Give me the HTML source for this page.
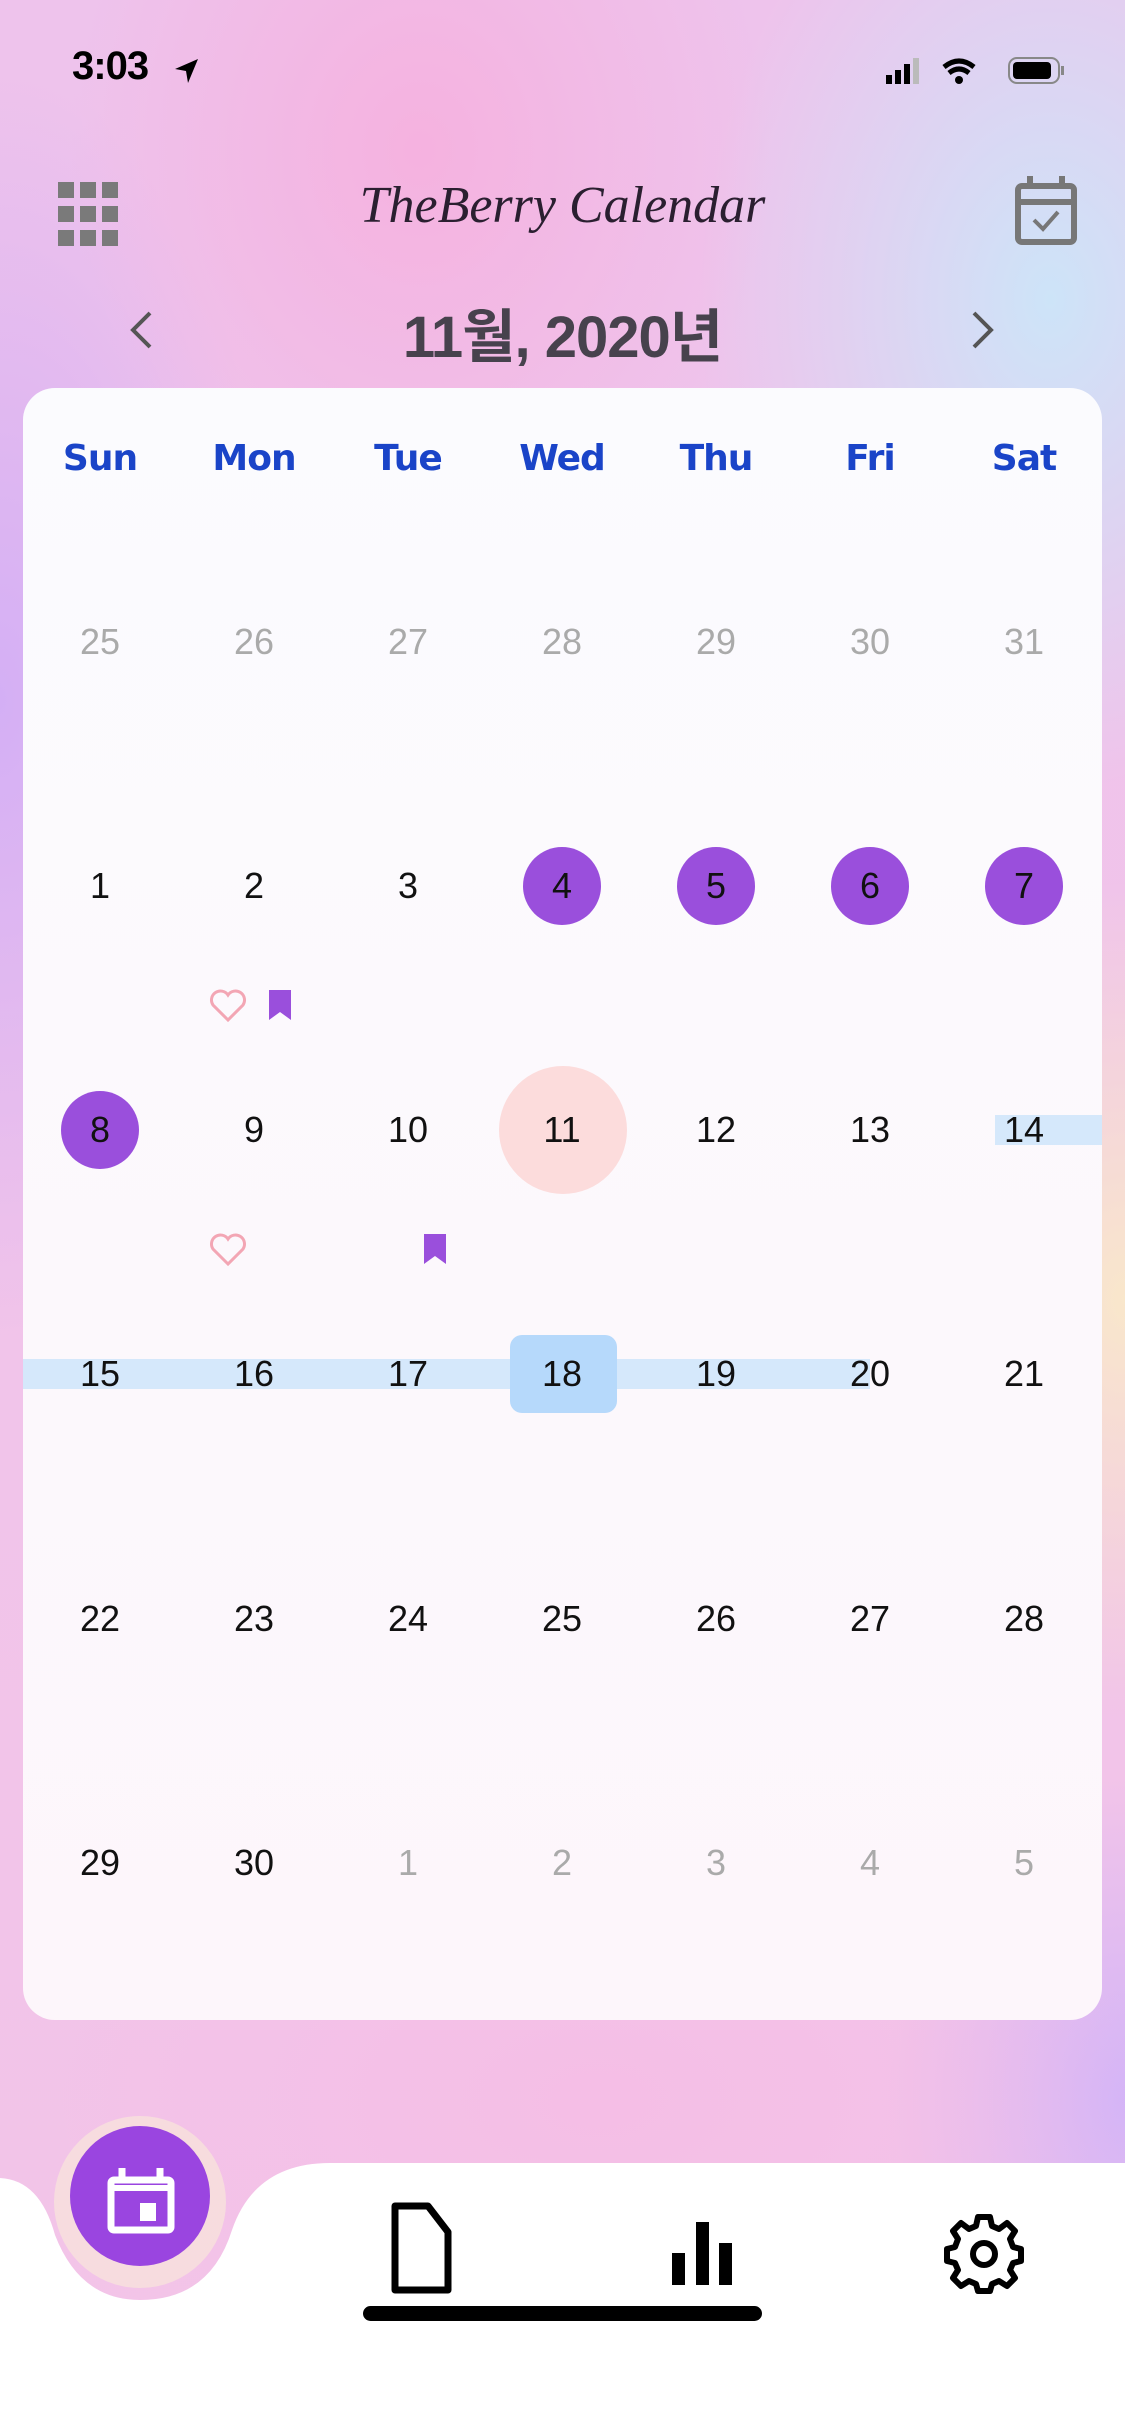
<!DOCTYPE html>
<html><head><meta charset="utf-8"><style>
*{margin:0;padding:0;box-sizing:border-box}
body{width:1125px;height:2436px;overflow:hidden;position:relative;font-family:"Liberation Sans","Noto Sans CJK KR",sans-serif;
background:
radial-gradient(ellipse 500px 600px at 420px 150px,rgba(246,176,222,.9),rgba(246,176,222,0) 70%),
radial-gradient(ellipse 500px 700px at 1050px 300px,rgba(205,228,248,1),rgba(205,228,248,0) 70%),
radial-gradient(ellipse 400px 900px at 0px 700px,rgba(212,175,245,1),rgba(212,175,245,0) 70%),
radial-gradient(ellipse 400px 600px at 1125px 1300px,rgba(250,235,200,.9),rgba(250,235,200,0) 70%),
radial-gradient(ellipse 700px 400px at 600px 2100px,rgba(245,190,230,1),rgba(245,190,230,0) 80%),
radial-gradient(ellipse 300px 400px at 1125px 2100px,rgba(210,180,248,1),rgba(210,180,248,0) 80%),
linear-gradient(180deg,#eec3ec,#f3c4e8);}
.abs{position:absolute}
.card{left:23px;top:388px;width:1079px;height:1632px;border-radius:32px;background:linear-gradient(180deg,#fbfbfe,#fdf6fb);}
.wd{position:absolute;top:438px;width:154px;text-align:center;font-weight:bold;font-size:36px;color:#1a44c8;font-family:"DejaVu Sans",sans-serif;letter-spacing:-1px}
.d{position:absolute;width:154px;text-align:center;font-size:36px;color:#111;line-height:40px}
.g{color:#aaa !important}
.circ{position:absolute;border-radius:50%}
</style></head><body>
<div class="abs" style="left:72px;top:44px;font-size:40px;font-weight:bold;color:#000;letter-spacing:-1px">3:03</div>
<svg class="abs" style="left:172px;top:56px" width="30" height="30" viewBox="0 0 30 30"><path d="M26 3 L3 13 L14 15 L16 27 Z" fill="#000"/></svg>
<svg class="abs" style="left:884px;top:55px" width="190" height="32" viewBox="0 0 190 32">
<rect x="2" y="20" width="6" height="9" fill="#000"/><rect x="11" y="15" width="6" height="14" fill="#000"/><rect x="20" y="9" width="6" height="20" fill="#000"/><rect x="29" y="3" width="6" height="26" fill="#bbb"/>
<path d="M60 12 Q75 0 90 12" stroke="#000" stroke-width="5" fill="none"/><path d="M65 18 Q75 10 85 18" stroke="#000" stroke-width="5" fill="none"/><circle cx="75" cy="25" r="4" fill="#000"/>
<rect x="125" y="3" width="50" height="25" rx="8" fill="none" stroke="#888" stroke-width="2"/><rect x="129" y="7" width="38" height="17" rx="4" fill="#000"/><rect x="177" y="11" width="3" height="9" fill="#888"/></svg>

<svg class="abs" style="left:58px;top:182px" width="62" height="64" viewBox="0 0 62 64"><g fill="#7a7a7a">
<rect x="0" y="0" width="16" height="16"/><rect x="22" y="0" width="16" height="16"/><rect x="44" y="0" width="16" height="16"/>
<rect x="0" y="24" width="16" height="16"/><rect x="22" y="24" width="16" height="16"/><rect x="44" y="24" width="16" height="16"/>
<rect x="0" y="48" width="16" height="16"/><rect x="22" y="48" width="16" height="16"/><rect x="44" y="48" width="16" height="16"/></g></svg>
<div class="abs" style="left:300px;top:176px;width:525px;text-align:center;font-family:'Liberation Serif',serif;font-style:italic;font-size:52px;color:#2a1f30">TheBerry Calendar</div>
<svg class="abs" style="left:1014px;top:174px" width="64" height="72" viewBox="0 0 64 72"><g fill="none" stroke="#777" stroke-width="6"><rect x="4" y="12" width="56" height="56" rx="4"/><line x1="16" y1="2" x2="16" y2="14"/><line x1="48" y1="2" x2="48" y2="14"/><line x1="4" y1="28" x2="60" y2="28"/><path d="M20 46 L29 55 L44 38" stroke-width="4"/></g></svg>

<svg class="abs" style="left:128px;top:310px" width="26" height="40" viewBox="0 0 26 40"><path d="M22 3 L5 20 L22 37" stroke="#555" stroke-width="4" fill="none"/></svg>
<svg class="abs" style="left:970px;top:310px" width="26" height="40" viewBox="0 0 26 40"><path d="M4 3 L21 20 L4 37" stroke="#555" stroke-width="4" fill="none"/></svg>
<div class="abs" style="left:300px;top:290px;width:525px;text-align:center;font-size:58px;font-weight:bold;color:#47424d;letter-spacing:-1px">11월, 2020년</div>

<div class="abs card"></div>
<div class="wd" style="left:23px">Sun</div><div class="wd" style="left:177px">Mon</div><div class="wd" style="left:331px">Tue</div><div class="wd" style="left:485px">Wed</div><div class="wd" style="left:639px">Thu</div><div class="wd" style="left:793px">Fri</div><div class="wd" style="left:947px">Sat</div>

<div class="abs" style="left:995px;top:1115px;width:107px;height:30px;background:#d5e8fb"></div>
<div class="abs" style="left:23px;top:1359px;width:847px;height:30px;background:#d5e8fb"></div>
<div class="abs" style="left:510px;top:1335px;width:107px;height:78px;border-radius:12px;background:#b6d9fb"></div>
<div class="circ" style="left:523px;top:847px;width:78px;height:78px;background:#9a4fdc"></div>
<div class="circ" style="left:677px;top:847px;width:78px;height:78px;background:#9a4fdc"></div>
<div class="circ" style="left:831px;top:847px;width:78px;height:78px;background:#9a4fdc"></div>
<div class="circ" style="left:985px;top:847px;width:78px;height:78px;background:#9a4fdc"></div>
<div class="circ" style="left:61px;top:1091px;width:78px;height:78px;background:#9a4fdc"></div>
<div class="circ" style="left:499px;top:1066px;width:128px;height:128px;background:#fcdcdc"></div>

<div id="days"></div>
<script>
var rows=[[25,26,27,28,29,30,31],[1,2,3,4,5,6,7],[8,9,10,11,12,13,14],[15,16,17,18,19,20,21],[22,23,24,25,26,27,28],[29,30,1,2,3,4,5]];
var ys=[622,866,1110,1354,1599,1843],h='';
rows.forEach(function(r,i){r.forEach(function(n,j){var g=(i==0)||(i==5&&j>1);
h+='<div class="d'+(g?' g':'')+'" style="left:'+(23+154*j)+'px;top:'+ys[i]+'px;">'+n+'</div>';});});
document.getElementById('days').innerHTML=h;
</script>
<svg class="abs" style="left:208px;top:988px" width="40" height="36" viewBox="0 0 40 36"><path d="M20 32 L5 17 A8 8 0 0 1 20 7 A8 8 0 0 1 35 17 Z" fill="none" stroke="#f3a6b4" stroke-width="3"/></svg>
<svg class="abs" style="left:267px;top:988px" width="26" height="34" viewBox="0 0 26 34"><path d="M2 2 H24 V32 L13 24 L2 32 Z" fill="#9a4fdc"/></svg>
<svg class="abs" style="left:208px;top:1232px" width="40" height="36" viewBox="0 0 40 36"><path d="M20 32 L5 17 A8 8 0 0 1 20 7 A8 8 0 0 1 35 17 Z" fill="none" stroke="#f3a6b4" stroke-width="3"/></svg>
<svg class="abs" style="left:422px;top:1232px" width="26" height="34" viewBox="0 0 26 34"><path d="M2 2 H24 V32 L13 24 L2 32 Z" fill="#9a4fdc"/></svg>

<svg class="abs" style="left:0;top:2100px" width="1125" height="336" viewBox="0 0 1125 336">
<g transform="translate(0 40)">
<circle cx="140" cy="62" r="86" fill="#f8e2dc" opacity=".8"/>
<path d="M0 38 Q40 40 55 95 Q80 160 140 160 Q210 160 232 90 Q255 23 330 23 H1125 V296 H0 Z" fill="#fff"/>
<circle cx="140" cy="56" r="70" fill="#9a45e0"/>
<g fill="none" stroke="#fff" stroke-width="7"><rect x="111" y="40" width="60" height="50" rx="3"/><line x1="122" y1="28" x2="122" y2="40"/><line x1="160" y1="28" x2="160" y2="40"/></g>
<rect x="111" y="45" width="60" height="6" fill="#fff"/><rect x="140" y="63" width="16" height="18" fill="#fff"/>
<path d="M395 66 H428 L448 92 V150 H395 Z" fill="none" stroke="#000" stroke-width="7" stroke-linejoin="round"/>
<rect x="672" y="113" width="13" height="32" fill="#000"/><rect x="696" y="82" width="13" height="63" fill="#000"/><rect x="719" y="103" width="13" height="42" fill="#000"/>
<g transform="translate(984 113)"><path d="M-6 -36 H6 L8 -27 L15 -24 L23 -30 L31 -22 L26 -14 L29 -6 L37 -4 V8 L29 10 L26 17 L31 25 L23 33 L15 28 L8 31 L6 38 H-6 L-8 31 L-15 28 L-23 33 L-31 25 L-26 17 L-29 10 L-37 8 V-4 L-29 -6 L-26 -14 L-31 -22 L-23 -30 L-15 -24 L-8 -27 Z" fill="none" stroke="#000" stroke-width="6" stroke-linejoin="round"/><circle cx="0" cy="1" r="11" fill="none" stroke="#000" stroke-width="6"/></g>
<rect x="363" y="166" width="399" height="15" rx="7.5" fill="#000"/>
</g>
</svg>
</body></html>
